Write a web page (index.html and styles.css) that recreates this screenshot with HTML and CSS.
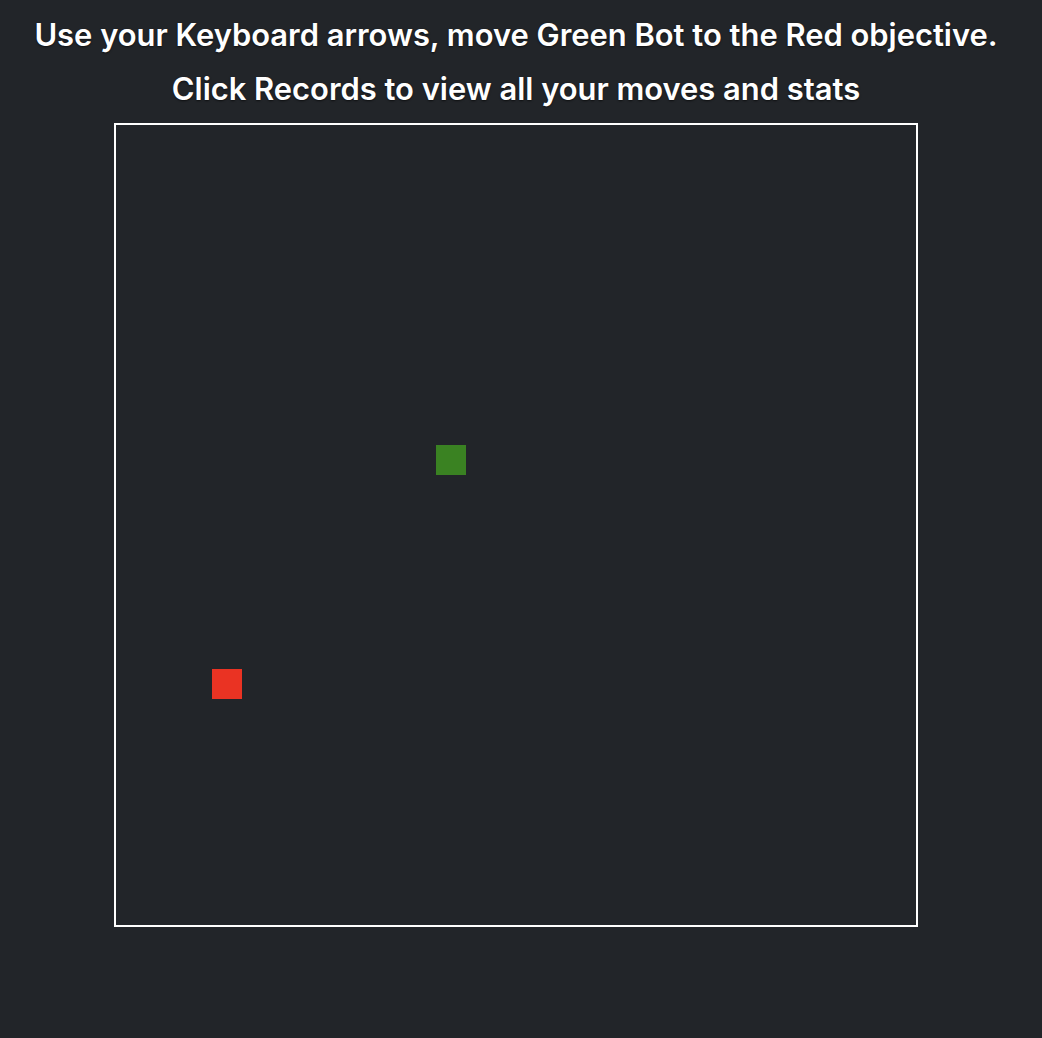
FILE: index.html
```html
<!DOCTYPE html>
<html>
<head>
<meta charset="utf-8">
<link rel="stylesheet" href="styles.css">
</head>
<body>
<main class="app">
  <h2 class="title">Use your Keyboard arrows, move Green Bot to the Red objective.</h2>
  <h2 class="title second">Click Records to view all your moves and stats</h2>
  <div class="board">
    <div class="cell bot" style="left:320px;top:320px"></div>
    <div class="cell goal" style="left:96px;top:544px"></div>
  </div>
</main>
</body>
</html>
```
FILE: styles.css
```css
html, body {
  margin: 0;
  padding: 0;
  background: #222529;
  height: 100%;
}
.app {
  width: 1032px;
  display: flex;
  flex-direction: column;
  align-items: center;
  font-family: Inter, "Noto Sans", sans-serif;
  color: #fff;
}
.title {
  margin: 0;
  font-size: 30.9px;
  font-weight: 600;
  line-height: 36px;
  text-shadow: 0 1px 2px rgba(0,0,0,0.6);
  margin-top: 17px;
}
.title.second {
  margin-top: 18px;
}
.board {
  position: relative;
  width: 800px;
  height: 800px;
  border: 2px solid #fff;
  margin-top: 16px;
}
.cell {
  position: absolute;
  width: 30px;
  height: 30px;
}
.bot { background: #3a8222; }
.goal { background: #ea3323; }
```
